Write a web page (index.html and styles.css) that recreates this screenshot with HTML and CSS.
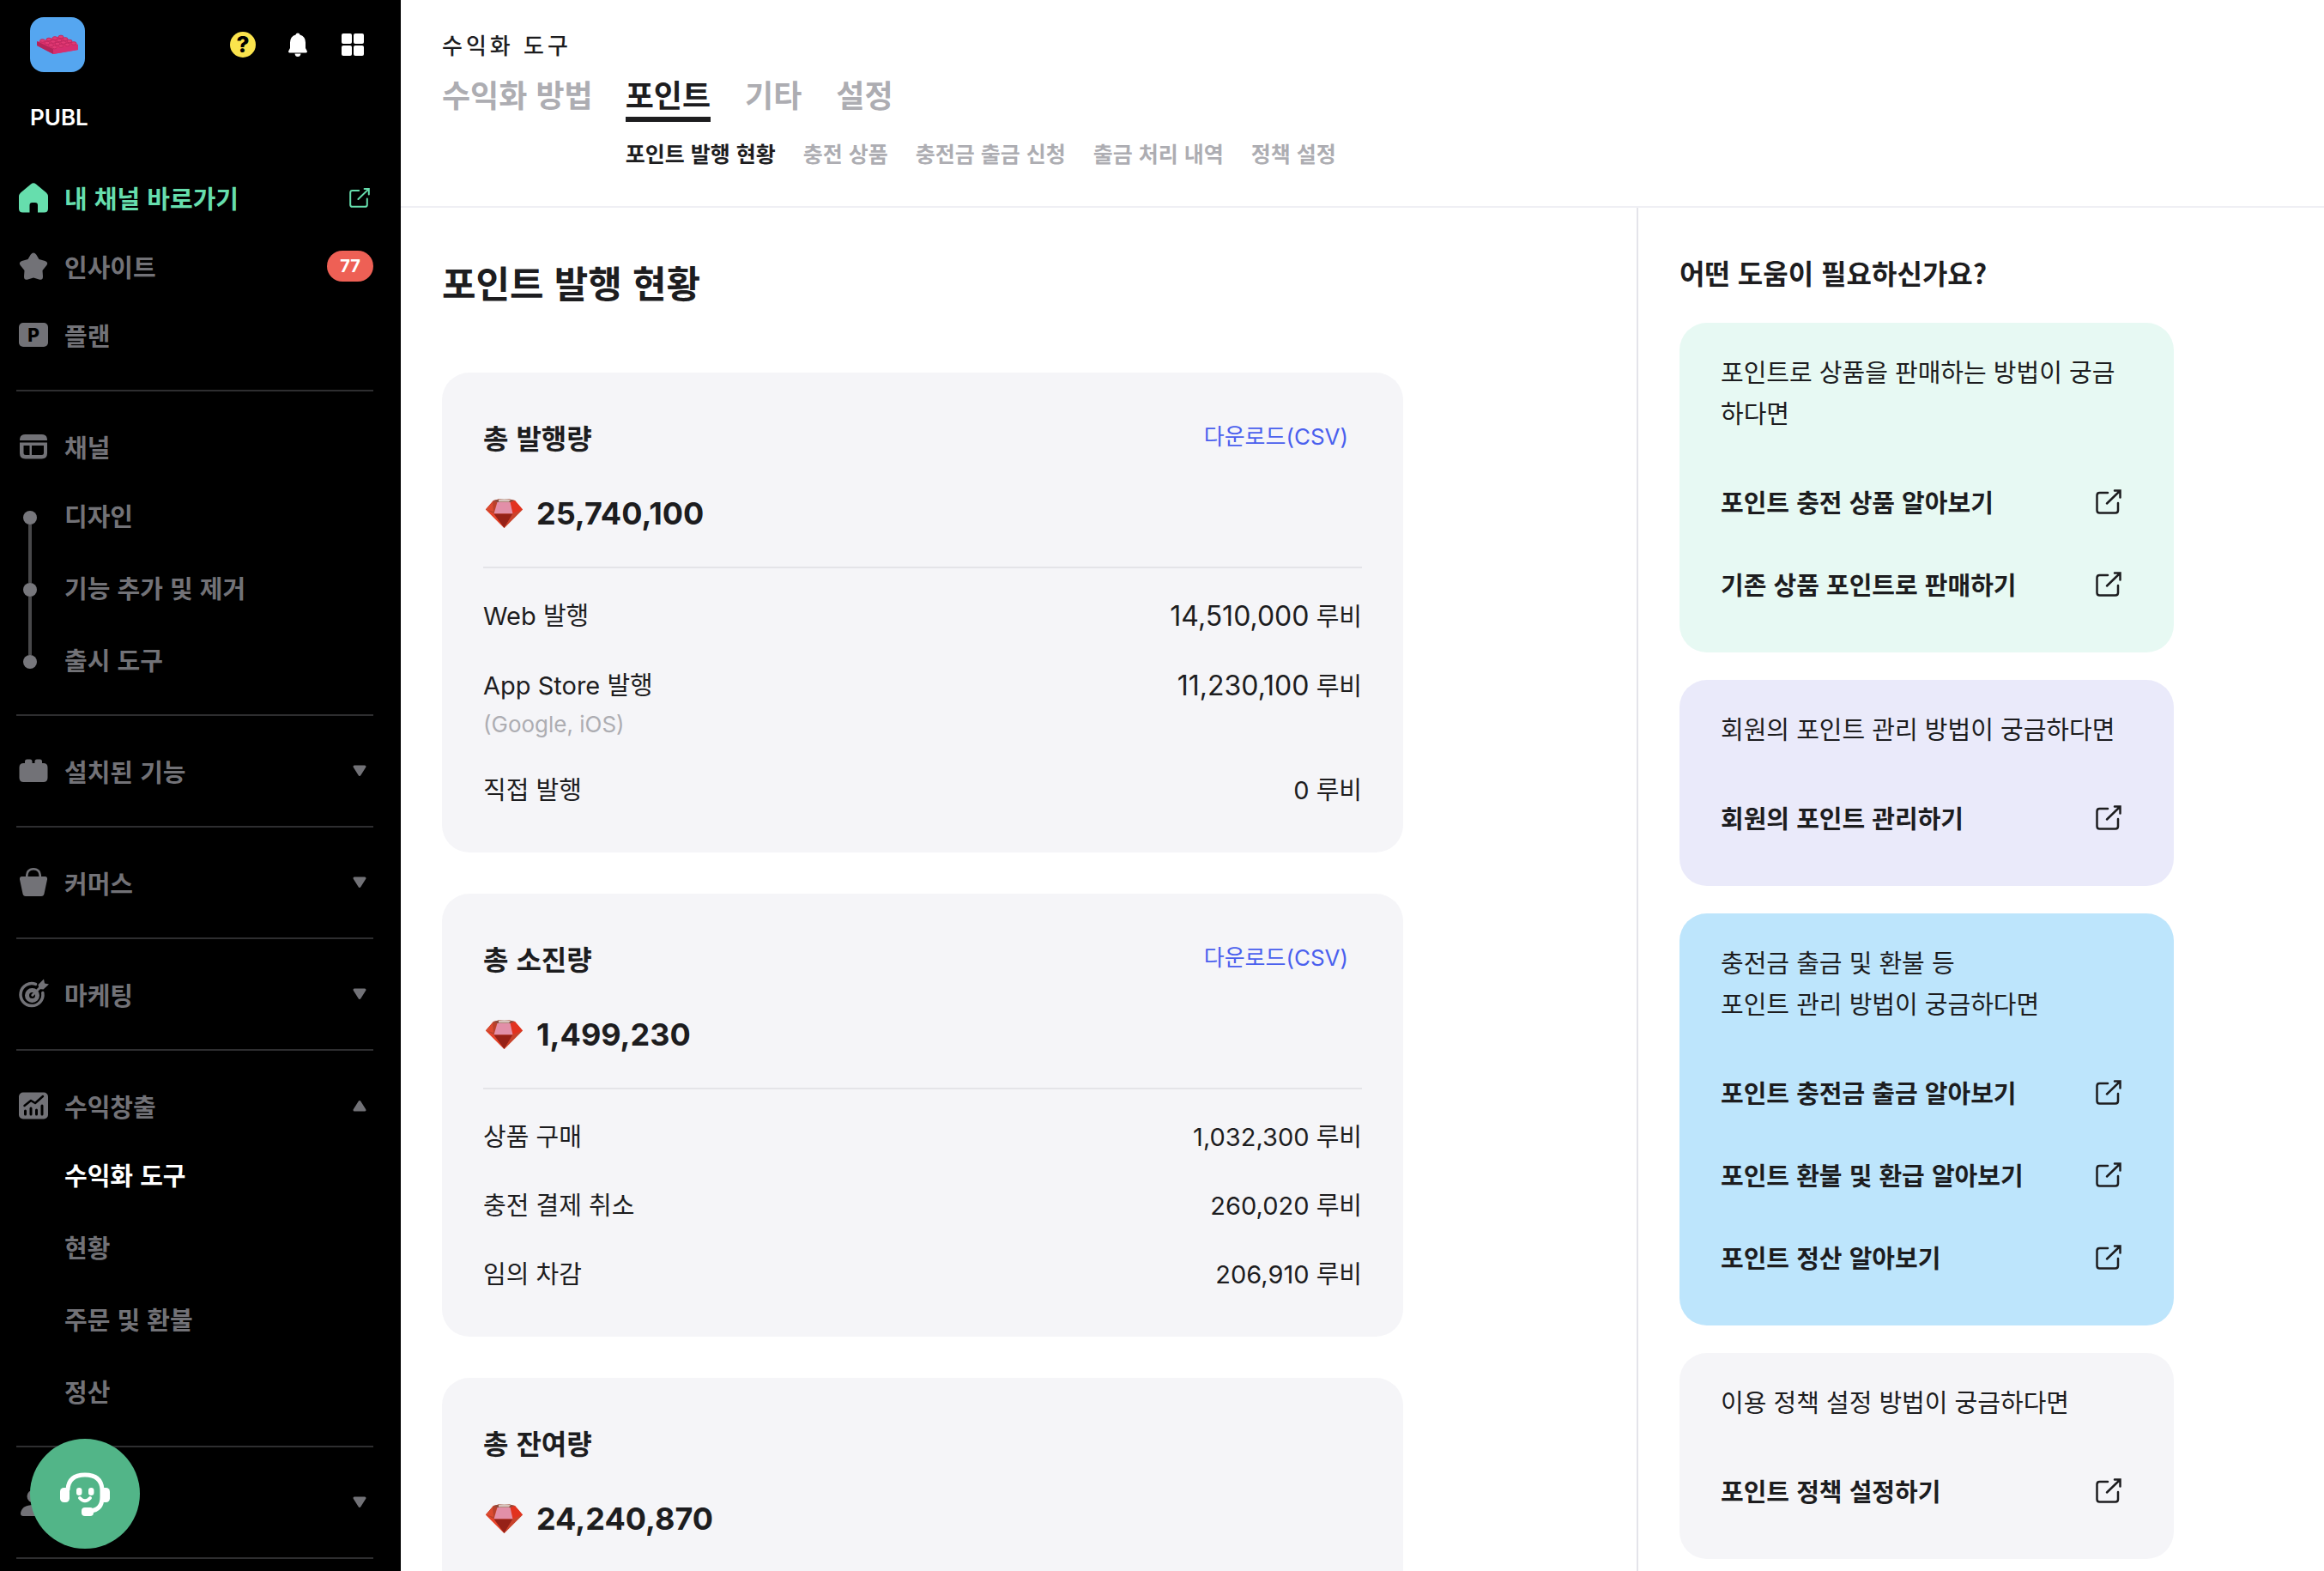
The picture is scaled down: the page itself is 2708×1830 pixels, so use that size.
FILE: index.html
```html
<!DOCTYPE html>
<html lang="ko">
<head>
  <meta charset="UTF-8">
  <meta name="viewport" content="width=device-width, initial-scale=1.0">
  <title>포인트 발행 현황</title>
  <link rel="stylesheet" href="styles.css">
</head>
<body>
  <!-- Shared shapes -->
  <svg class="sprite" aria-hidden="true">
    <symbol id="external" viewBox="0 0 40 40">
      <path d="M19 10H9.500Q6.500 10 6.500 13V30.500Q6.500 33.500 9.500 33.500H28Q31 33.500 31 30.500V22" />
      <path d="M18 22.500L33 8M27 7.500H33.500V15.500" />
    </symbol>
    <symbol id="arrow" viewBox="0 0 32 32">
      <path d="M10 11H22L16 20.500Z" />
    </symbol>
    <symbol id="gem" viewBox="0 0 52 44">
      <path fill="#d9472b" d="M3 17.500L12 7Q24 3 37 7L46 17.500L24.500 39Z" />
      <path fill="#8d4a3c" d="M12 7Q24 3 37 7L32 9.500H16Z" />
      <path fill="#d8c4bd" d="M18 5.800Q25 4.200 32 6L30 8.500H18Z" />
      <path fill="#b8412c" d="M12 7L16 9L12.500 22.500L3 17.500Z" />
      <path fill="#dc4a30" d="M11 8.500L12 20L3 17.500Z" />
      <path fill="#e2321f" d="M37 7L46 17.500L34.500 22.500L31.500 9Z" />
      <path fill="#e28fa8" d="M16.500 9H31.500L34.500 22.500H12.500Z" />
      <path fill="#e8452c" d="M3 17.500L12.500 22.500L24.500 39Z" />
      <path fill="#962117" d="M12.500 22.500H34.500L24.500 39Z" />
      <path fill="#c8432c" d="M46 17.500L34.500 22.500L24.500 39Z" />
    </symbol>
  </svg>

  <div class="app">
    <aside class="sidebar">
      <div class="sidebar-top">
        <a class="logo" href="#" aria-label="PUBL">
          <svg viewBox="0 0 64 64">
            <path fill="#e0316c" d="M8 29L36 22L56 32V38L27 43L8 33Z" />
            <path fill="#b5245a" d="M8 28L27 37V43L8 33Z" />
            <path fill="#d62f70" d="M27 37L56 32V38L27 43Z" />
            <g fill="#e23a74" stroke="#c22a62" stroke-width="1">
              <ellipse cx="36" cy="23" rx="3" ry="1.800" /><ellipse cx="29" cy="24.500" rx="3" ry="1.800" />
              <ellipse cx="22" cy="26" rx="3" ry="1.800" /><ellipse cx="14.500" cy="27.500" rx="3" ry="1.800" />
              <ellipse cx="41" cy="25.500" rx="3" ry="1.800" /><ellipse cx="34" cy="27" rx="3" ry="1.800" />
              <ellipse cx="27" cy="28.500" rx="3" ry="1.800" /><ellipse cx="20" cy="30" rx="3" ry="1.800" />
              <ellipse cx="46" cy="28" rx="3" ry="1.800" /><ellipse cx="39" cy="29.500" rx="3" ry="1.800" />
              <ellipse cx="32" cy="31" rx="3" ry="1.800" /><ellipse cx="24.500" cy="32.500" rx="3" ry="1.800" />
              <ellipse cx="51" cy="30.500" rx="3" ry="1.800" /><ellipse cx="43.500" cy="32" rx="3" ry="1.800" />
              <ellipse cx="36" cy="33.500" rx="3" ry="1.800" /><ellipse cx="28.500" cy="35" rx="3" ry="1.800" />
            </g>
          </svg>
        </a>
        <div class="tools">
          <button class="tool" type="button"><span class="help">?</span></button>
          <button class="tool" type="button" aria-label="알림">
            <svg viewBox="0 0 32 32"><path d="M16 2.500Q18 2.500 18.500 4.500Q25 6.500 25 13.500V20L26.800 23.500Q27.500 25.500 25.500 25.500H6.500Q4.500 25.500 5.200 23.500L7 20V13.500Q7 6.500 13.500 4.500Q14 2.500 16 2.500ZM12.500 26.500H19.500Q19 30 16 30Q13 30 12.500 26.500Z" /></svg>
          </button>
          <button class="tool" type="button" aria-label="앱 메뉴">
            <svg viewBox="0 0 32 32"><rect x="3" y="3" width="12" height="12" rx="2" /><rect x="17" y="3" width="12" height="12" rx="2" /><rect x="3" y="17" width="12" height="12" rx="2" /><rect x="17" y="17" width="12" height="12" rx="2" /></svg>
          </button>
        </div>
      </div>
      <p class="brand">PUBL</p>

      <nav class="menu">
        <a class="menu-row mint" href="#">
          <svg class="icon" viewBox="0 0 40 40"><path d="M17 4.500Q20 2 23 4.500L35 14.500Q37 16.500 37 19V33Q37 37.500 32.500 37.500H25V29Q25 26 22 26H18.500Q15.500 26 15.500 29V37.500H7.500Q3 37.500 3 33V19Q3 16.500 5 14.500Z" /></svg>
          <span>내 채널 바로가기</span>
          <svg class="end line"><use href="#external" /></svg>
        </a>
        <a class="menu-row" href="#">
          <svg class="icon" viewBox="0 0 40 40"><path d="M16.800 6.500Q20 2.500 23.200 6.500L26.500 12L33.500 14Q38 15.500 35 19.500L30.500 25L31 32Q31 37 26.500 35.500L20 33.500L13.500 35.500Q9 37 9 32L9.500 25L5 19.500Q2 15.500 6.500 14L13.500 12Z" /></svg>
          <span>인사이트</span>
          <span class="badge">77</span>
        </a>
        <a class="menu-row" href="#">
          <svg class="icon" viewBox="0 0 40 40"><rect x="3" y="6" width="34" height="28" rx="5" /><text class="icon-letter" x="20" y="27.500">P</text></svg>
          <span>플랜</span>
        </a>
        <hr>
        <a class="menu-row" href="#">
          <svg class="icon" viewBox="0 0 40 40"><path fill-rule="evenodd" d="M4 12.500Q4 6 10.500 6H29.500Q36 6 36 12.500V13H4ZM4 15.500H36V28Q36 34.500 29.500 34.500H10.500Q4 34.500 4 28ZM8.500 19V27.500Q8.500 30 11 30H15.500V19ZM18 19V30H29.500Q32 30 32 27.500V19Z" /></svg>
          <span>채널</span>
        </a>
        <ul class="submenu steps">
          <li><a href="#">디자인</a></li>
          <li><a href="#">기능 추가 및 제거</a></li>
          <li><a href="#">출시 도구</a></li>
        </ul>
        <hr>
        <button class="menu-row" type="button">
          <svg class="icon" viewBox="0 0 40 40"><path d="M10 11V9Q10 6.500 12.500 6.500H16Q18.500 6.500 18.500 9V11H21.500V9Q21.500 6.500 24 6.500H27.500Q30 6.500 30 9V11H31.500Q36.500 11 36.500 16V28Q36.500 33 31.500 33H8.500Q3.500 33 3.500 28V16Q3.500 11 8.500 11Z" /></svg>
          <span>설치된 기능</span>
          <svg class="end"><use href="#arrow" /></svg>
        </button>
        <hr>
        <button class="menu-row" type="button">
          <svg class="icon" viewBox="0 0 40 40"><path d="M6.500 13H33.500Q36.500 13 36 16.500L32.500 33Q32 36 29 36H11Q8 36 7.500 33L4 16.500Q3.500 13 6.500 13Z" /><path fill="none" stroke="currentColor" stroke-width="2.500" d="M12.200 14Q12 4.200 20 4.200Q28 4.200 27.800 14" /></svg>
          <span>커머스</span>
          <svg class="end"><use href="#arrow" /></svg>
        </button>
        <hr>
        <button class="menu-row" type="button">
          <svg class="icon" viewBox="0 0 40 40">
            <g fill="none" stroke="currentColor" stroke-linecap="round">
              <path stroke-width="3.500" d="M22.500 8.400A13 13 0 1 0 30.800 18.500" />
              <circle cx="18.500" cy="21.500" r="6" stroke-width="5" />
              <path stroke-width="3" d="M18.800 21.200L29 11" />
            </g>
            <path d="M25.500 9L32 2.500L33 7.500L38 8.500L31.500 14.500L26.500 14Z" />
          </svg>
          <span>마케팅</span>
          <svg class="end"><use href="#arrow" /></svg>
        </button>
        <hr>
        <button class="menu-row" type="button">
          <svg class="icon" viewBox="0 0 40 40"><rect x="3" y="4.500" width="34" height="31" rx="5" /><g fill="none" stroke="#000" stroke-width="2.500" stroke-linecap="round" stroke-linejoin="round"><path d="M9.500 20L17 14L22 17L31 9" /><path stroke-width="3" d="M10.500 26V30M17 23V30M23.500 25V30M30 20V30" /></g></svg>
          <span>수익창출</span>
          <svg class="end up"><use href="#arrow" /></svg>
        </button>
        <ul class="submenu">
          <li><a class="on" href="#">수익화 도구</a></li>
          <li><a href="#">현황</a></li>
          <li><a href="#">주문 및 환불</a></li>
          <li><a href="#">정산</a></li>
        </ul>
        <hr>
        <button class="menu-row" type="button" aria-label="회원">
          <svg class="icon" viewBox="0 0 40 40"><circle cx="20" cy="13" r="7.500" /><path d="M5 33Q6 23 20 23Q34 23 35 33Q35 36 32 36H8Q5 36 5 33Z" /></svg>
          <svg class="end"><use href="#arrow" /></svg>
        </button>
        <hr>
      </nav>
    </aside>

    <div class="page">
      <header class="page-header">
        <p class="crumb">수익화 도구</p>
        <div class="tab-grid">
          <nav class="tabs"><a href="#">수익화 방법</a></nav>
          <nav class="tabs">
            <a class="on" href="#">포인트</a>
            <a href="#">기타</a>
            <a href="#">설정</a>
          </nav>
          <nav class="subtabs">
            <a class="on" href="#">포인트 발행 현황</a>
            <a href="#">충전 상품</a>
            <a href="#">충전금 출금 신청</a>
            <a href="#">출금 처리 내역</a>
            <a href="#">정책 설정</a>
          </nav>
        </div>
      </header>

      <div class="columns">
        <main class="content">
          <h1>포인트 발행 현황</h1>

          <section class="card">
            <div class="card-head">
              <h2>총 발행량</h2>
              <button class="download" type="button">다운로드(CSV)</button>
            </div>
            <p class="total"><svg class="gem"><use href="#gem" /></svg>25,740,100</p>
            <dl class="rows">
              <div><dt>Web 발행</dt><dd><span class="big">14,510,000</span> 루비</dd></div>
              <div><dt>App Store 발행<small>(Google, iOS)</small></dt><dd><span class="big">11,230,100</span> 루비</dd></div>
              <div><dt>직접 발행</dt><dd>0 루비</dd></div>
            </dl>
          </section>

          <section class="card">
            <div class="card-head">
              <h2>총 소진량</h2>
              <button class="download" type="button">다운로드(CSV)</button>
            </div>
            <p class="total"><svg class="gem"><use href="#gem" /></svg>1,499,230</p>
            <dl class="rows">
              <div><dt>상품 구매</dt><dd>1,032,300 루비</dd></div>
              <div><dt>충전 결제 취소</dt><dd>260,020 루비</dd></div>
              <div><dt>임의 차감</dt><dd>206,910 루비</dd></div>
            </dl>
          </section>

          <section class="card">
            <div class="card-head">
              <h2>총 잔여량</h2>
            </div>
            <p class="total"><svg class="gem"><use href="#gem" /></svg>24,240,870</p>
          </section>
        </main>

        <aside class="help-panel">
          <h2>어떤 도움이 필요하신가요?</h2>

          <section class="guide green">
            <p>포인트로 상품을 판매하는 방법이 궁금하다면</p>
            <a href="#">포인트 충전 상품 알아보기<svg class="line"><use href="#external" /></svg></a>
            <a href="#">기존 상품 포인트로 판매하기<svg class="line"><use href="#external" /></svg></a>
          </section>

          <section class="guide purple">
            <p>회원의 포인트 관리 방법이 궁금하다면</p>
            <a href="#">회원의 포인트 관리하기<svg class="line"><use href="#external" /></svg></a>
          </section>

          <section class="guide blue">
            <p>충전금 출금 및 환불 등<br>포인트 관리 방법이 궁금하다면</p>
            <a href="#">포인트 충전금 출금 알아보기<svg class="line"><use href="#external" /></svg></a>
            <a href="#">포인트 환불 및 환급 알아보기<svg class="line"><use href="#external" /></svg></a>
            <a href="#">포인트 정산 알아보기<svg class="line"><use href="#external" /></svg></a>
          </section>

          <section class="guide gray">
            <p>이용 정책 설정 방법이 궁금하다면</p>
            <a href="#">포인트 정책 설정하기<svg class="line"><use href="#external" /></svg></a>
          </section>
        </aside>
      </div>
    </div>
  </div>

  <!-- Support chat -->
  <button class="support" type="button" aria-label="상담">
    <svg viewBox="0 0 64 64">
      <g fill="none" stroke="#fff" stroke-linecap="round">
        <path stroke-width="5" d="M12 27Q13 10 32 10Q51 10 52 27V36Q52 51 38 52" />
        <path stroke-width="4" d="M26 37Q32 43.500 38 37" />
      </g>
      <g fill="#fff">
        <rect x="3" y="25" width="11" height="17" rx="4.500" />
        <rect x="50" y="25" width="11" height="17" rx="4.500" />
        <rect x="22" y="25" width="6.500" height="9" rx="3.200" />
        <rect x="36" y="25" width="6.500" height="9" rx="3.200" />
        <rect x="28" y="48" width="14" height="10" rx="4" />
      </g>
    </svg>
  </button>
</body>
</html>
```
FILE: styles.css
```css
* {
  box-sizing: border-box;
  margin: 0;
  padding: 0;
}

body {
  background: #fff;
  color: #1d1d1f;
  font-family: 'Noto Sans CJK KR', sans-serif;
  font-size: 29px;
  line-height: 48px;
}

a {
  color: inherit;
  text-decoration: none;
}

ul {
  list-style: none;
}

button {
  background: none;
  border: none;
  color: inherit;
  font: inherit;
  cursor: pointer;
}

.sprite {
  display: none;
}

.line {
  fill: none;
  stroke: currentColor;
  stroke-width: 2.5;
  stroke-linecap: round;
}

.app {
  display: flex;
  height: 100vh;
  overflow: hidden;
}

/* Sidebar */
.sidebar {
  flex: 0 0 467px;
  background: #000;
  color: #727277;
  padding-top: 20px;
  overflow: hidden;
}

.sidebar-top {
  display: flex;
  justify-content: space-between;
  padding: 0 24px 0 35px;
}

.logo {
  width: 64px;
  height: 64px;
  border-radius: 16px;
  background: #55a6f0;
}

.logo svg {
  display: block;
}

.tools {
  display: flex;
}

.tool {
  display: flex;
  align-items: center;
  justify-content: center;
  width: 64px;
  height: 64px;
}

.tool svg {
  width: 32px;
  height: 32px;
  fill: #fff;
}

.help {
  width: 30px;
  height: 30px;
  border-radius: 50%;
  background: #fbe44d;
  color: #000;
  font: 800 26px/30px 'Inter', sans-serif;
}

.brand {
  padding: 30px 35px;
  color: #fff;
  font-family: 'Inter', sans-serif;
  font-size: 26px;
  font-weight: 600;
  line-height: 46px;
}

.menu {
  padding: 0 32px 0 19px;
}

.menu hr {
  height: 2px;
  margin: 24px 0;
  border: none;
  background: #2e2e30;
}

.menu-row {
  display: flex;
  align-items: center;
  gap: 16px;
  width: 100%;
  height: 80px;
  font-weight: 700;
}

.mint {
  color: #66dead;
}

.icon {
  width: 40px;
  height: 40px;
  fill: currentColor;
}

.icon-letter {
  fill: #000;
  font: 800 21px 'Inter', sans-serif;
  text-anchor: middle;
}

.end {
  width: 32px;
  height: 32px;
  margin-left: auto;
}

.end:not(.line) {
  fill: currentColor;
  stroke: currentColor;
  stroke-width: 3;
  stroke-linejoin: round;
}

.up {
  transform: rotate(180deg);
}

.badge {
  margin-left: auto;
  padding: 0 15px;
  border-radius: 18px;
  background: #ee6055;
  color: #fff;
  font: 700 20px/36px 'Inter', sans-serif;
}

.submenu {
  display: flex;
  flex-direction: column;
  gap: 4px;
  font-weight: 700;
}

.submenu a {
  display: block;
  padding-left: 56px;
  line-height: 80px;
}

.submenu .on {
  color: #fff;
}

.steps li {
  position: relative;
}

.steps li::before {
  content: '';
  position: absolute;
  left: 8px;
  top: 35px;
  z-index: 1;
  width: 16px;
  height: 16px;
  border-radius: 50%;
  background: #77777c;
}

.steps li + li::after {
  content: '';
  position: absolute;
  left: 14px;
  bottom: 45px;
  width: 4px;
  height: 68px;
  background: #48484a;
}

/* Page header */
.page {
  flex: 1;
  display: flex;
  flex-direction: column;
  min-width: 0;
}

.page-header {
  padding: 32px 48px 42px;
  border-bottom: 2px solid #efeff4;
  color: #adadb2;
}

.page-header .on {
  color: #1d1d1f;
}

.crumb {
  margin-bottom: 16px;
  color: #1d1d1f;
  font-size: 26px;
  font-weight: 500;
  line-height: 40px;
  letter-spacing: 4px;
}

.tab-grid {
  display: grid;
  grid-template-columns: auto 1fr;
  gap: 16px 38px;
}

.tabs {
  display: flex;
  gap: 40px;
  font-size: 36px;
  font-weight: 700;
  line-height: 42px;
}

.tabs a {
  padding-bottom: 6px;
  border-bottom: 6px solid transparent;
}

.tabs .on {
  border-color: #1d1d1f;
}

.subtabs {
  grid-column: 2;
  display: flex;
  gap: 32px;
  font-size: 25px;
  font-weight: 700;
  line-height: 40px;
}

/* Content */
.columns {
  flex: 1;
  display: flex;
  min-height: 0;
}

.content {
  flex: 1;
  padding: 56px 48px;
}

h1 {
  margin-bottom: 76px;
  font-size: 43px;
  font-weight: 700;
  line-height: 60px;
}

h2 {
  font-size: 32px;
  font-weight: 700;
  line-height: 54px;
}

.card {
  max-width: 1120px;
  margin-bottom: 48px;
  padding: 48px;
  border-radius: 32px;
  background: #f5f5f8;
}

.card-head {
  display: flex;
  justify-content: space-between;
  align-items: center;
  margin-bottom: 32px;
}

.download {
  padding: 0 16px;
  color: #4a60ee;
  font-family: 'Inter', 'Noto Sans CJK KR', sans-serif;
  font-size: 26px;
  line-height: 40px;
}

.total {
  display: flex;
  align-items: center;
  gap: 10px;
  padding-bottom: 32px;
  border-bottom: 2px solid #e4e4e8;
  font-family: 'Inter', sans-serif;
  font-size: 36px;
  font-weight: 700;
  line-height: 60px;
}

.gem {
  width: 52px;
  height: 44px;
}

.rows {
  display: flex;
  flex-direction: column;
  gap: 32px;
  padding-top: 32px;
  font-family: 'Inter', 'Noto Sans CJK KR', sans-serif;
}

.rows div {
  display: flex;
  justify-content: space-between;
}

.rows small {
  display: block;
  color: #adadb2;
  font-size: 26px;
  line-height: 42px;
}

.big {
  font-size: 32px;
}

/* Help panel */
.help-panel {
  flex: 0 0 801px;
  padding: 48px;
  border-left: 2px solid #e4e4ea;
}

.help-panel h2 {
  margin-bottom: 32px;
}

.guide {
  max-width: 576px;
  margin-bottom: 32px;
  padding: 32px 56px 32px 48px;
  border-radius: 32px;
}

.guide p {
  margin-bottom: 32px;
}

.guide a {
  display: flex;
  justify-content: space-between;
  align-items: center;
  height: 96px;
  font-weight: 700;
}

.guide svg {
  width: 40px;
  height: 40px;
}

.green {
  background: #e7f9f3;
}

.purple {
  background: #eaeafa;
}

.blue {
  background: #bde5fc;
}

.gray {
  background: #f5f5f8;
}

/* Support chat button */
.support {
  position: fixed;
  left: 35px;
  bottom: 26px;
  display: flex;
  align-items: center;
  justify-content: center;
  width: 128px;
  height: 128px;
  border-radius: 50%;
  background: #52b588;
}

.support svg {
  width: 64px;
  height: 64px;
}
```
